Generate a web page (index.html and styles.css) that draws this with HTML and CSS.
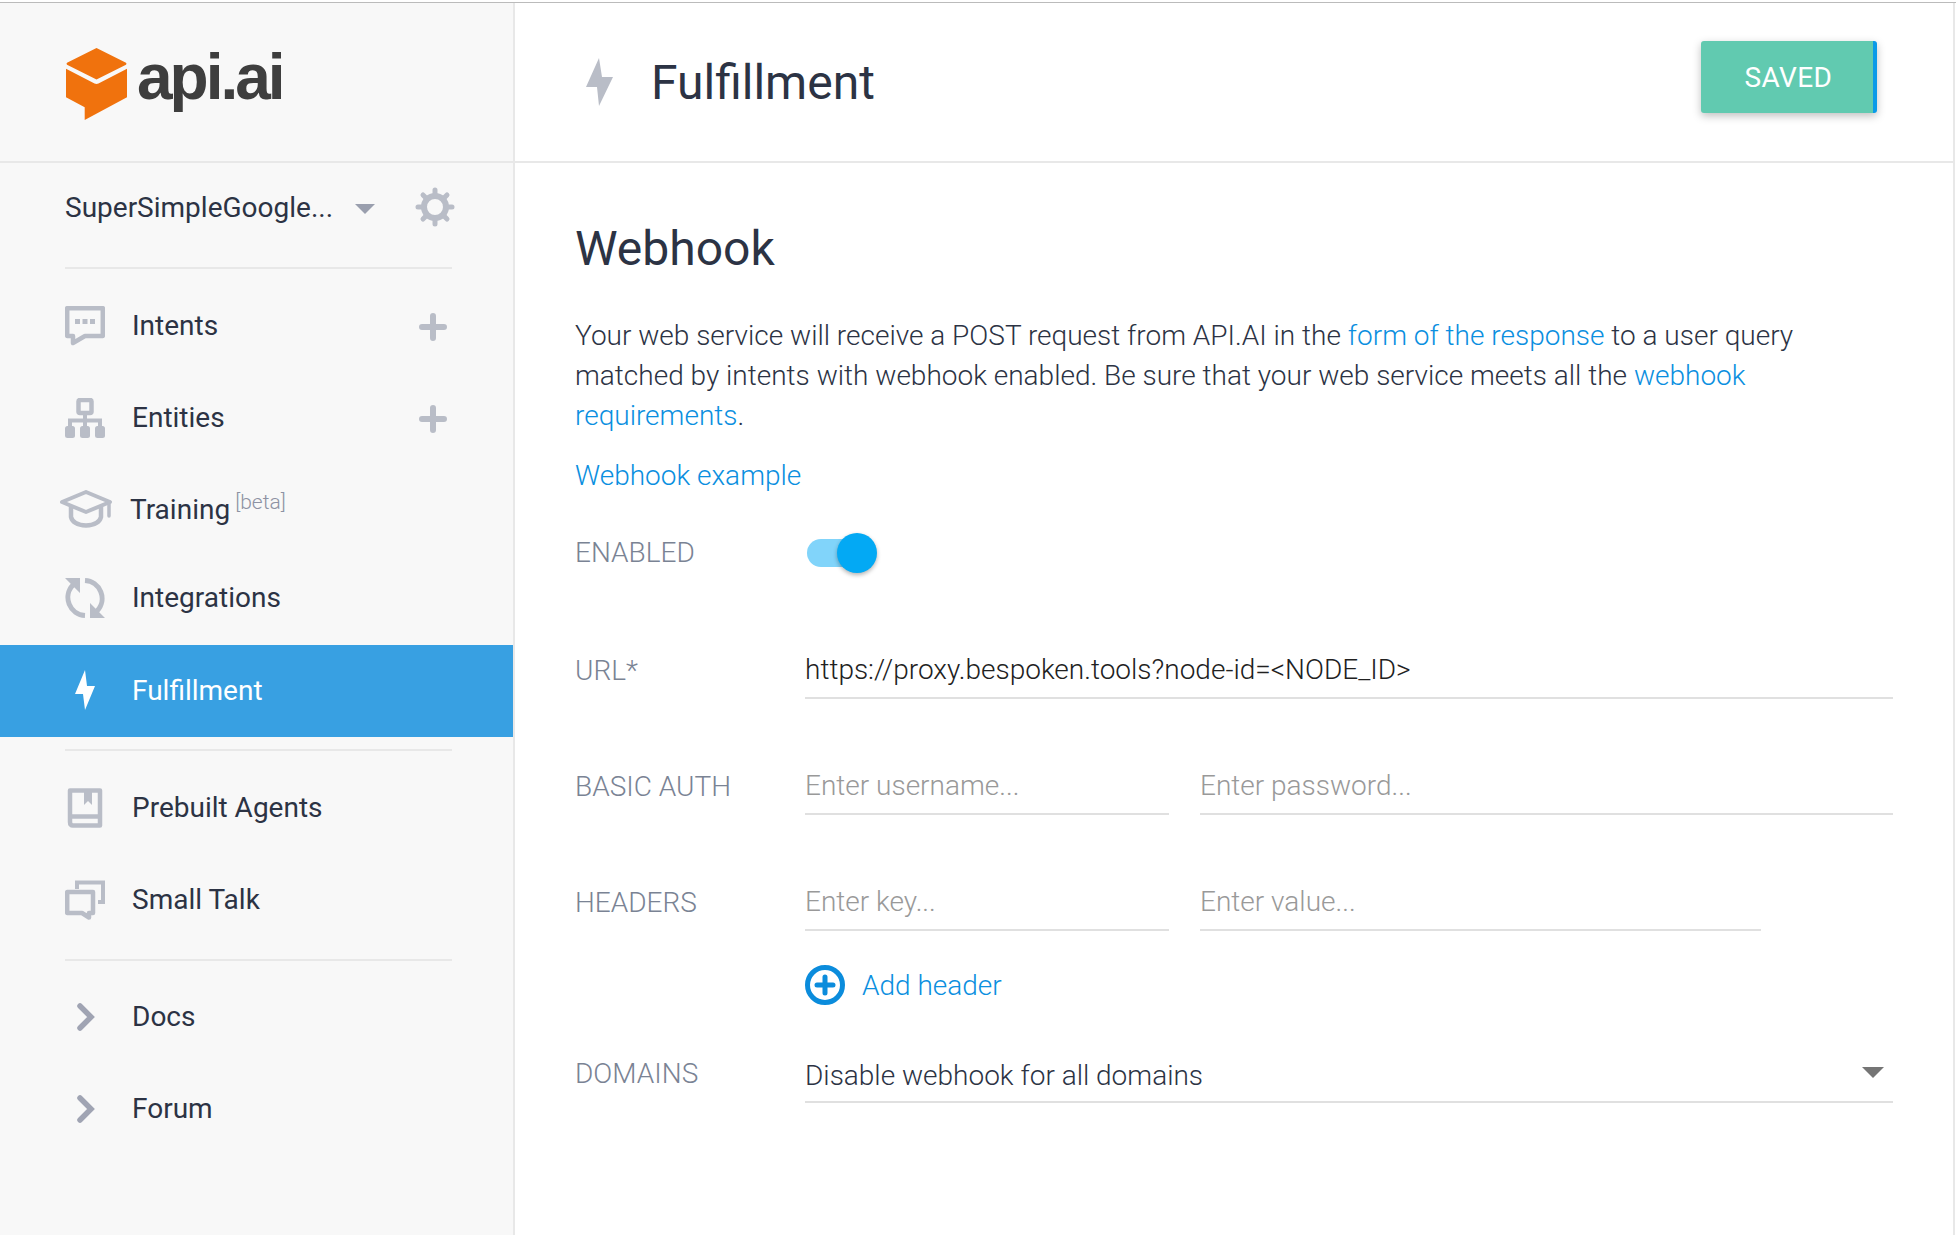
FILE: index.html
```html
<!DOCTYPE html>
<html lang="en">
<head>
    <meta charset="UTF-8">
    <meta name="viewport" content="width=device-width, initial-scale=1.0">
    <title>Fulfillment</title>
    <link rel="stylesheet" href="styles.css">
</head>
<body>

<div class="app">
    <!-- Sidebar -->
    <aside class="sidebar">
        <div class="logo-bar">
            <svg class="logo-mark" viewBox="0 0 62 74">
                <path fill="#f0720d" d="M31 0 L61 15 Q62 16 61 17 L31 32 L1 17 Q0 16 1 15 Z"/>
                <path fill="#f0720d" d="M0 21 L29 36 Q31 37 33 36 L62 21 V50 L19 73 V60 L0 50 Z"/>
            </svg>
            <span class="logo-text">api.ai</span>
        </div>

        <div class="agent-row">
            <span class="agent-name">SuperSimpleGoogle...</span>
            <span class="agent-caret"></span>
            <svg class="agent-gear" viewBox="0 0 40 40">
                <circle cx="20" cy="20" r="11" fill="none" stroke="#b9bdc7" stroke-width="6"/>
                <g stroke="#b9bdc7" stroke-width="5" stroke-linecap="round">
                    <path d="M20 3V8M20 32V37M3 20H8M32 20H37M8 8L11.5 11.5M28.5 28.5L32 32M32 8L28.5 11.5M11.5 28.5L8 32"/>
                </g>
            </svg>
        </div>
        <div class="sep"></div>

        <nav class="nav nav-first">
            <a class="nav-item">
                <svg class="nav-icon" viewBox="0 0 40 40">
                    <path fill="none" stroke="#b9bdc7" stroke-width="4.5" stroke-linejoin="round" d="M2.2 2.2H37.8V30H20L8 37V30H2.2Z"/>
                    <path fill="#b9bdc7" d="M10 13h5v5h-5zM17.500 13h5v5h-5zM25 13h5v5h-5z"/>
                </svg>
                <span>Intents</span>
                <svg class="nav-plus" viewBox="0 0 28 28"><path stroke="#b9bdc7" stroke-width="6" stroke-linecap="round" d="M14 3V25M3 14H25"/></svg>
            </a>
            <a class="nav-item">
                <svg class="nav-icon" viewBox="0 0 40 40">
                    <rect x="13.500" y="2" width="13" height="13" rx="1.500" fill="none" stroke="#b9bdc7" stroke-width="4.500"/>
                    <path fill="none" stroke="#b9bdc7" stroke-width="4" d="M20 15V27M5 29V22.500H35V29M20 22V29"/>
                    <rect x="0" y="28" width="10" height="12" rx="2.500" fill="#b9bdc7"/>
                    <rect x="15" y="28" width="10" height="12" rx="2.500" fill="#b9bdc7"/>
                    <rect x="30" y="28" width="10" height="12" rx="2.500" fill="#b9bdc7"/>
                </svg>
                <span>Entities</span>
                <svg class="nav-plus" viewBox="0 0 28 28"><path stroke="#b9bdc7" stroke-width="6" stroke-linecap="round" d="M14 3V25M3 14H25"/></svg>
            </a>
            <a class="nav-item nav-training">
                <svg class="training-icon" viewBox="0 0 54 38">
                    <path fill="none" stroke="#b9bdc7" stroke-width="4" stroke-linejoin="round" d="M27 2 L51 12 L27 22 L3 12 Z"/>
                    <path fill="none" stroke="#b9bdc7" stroke-width="4.500" d="M12 17V27Q14 35 27 35.500Q40 35 42 27V17"/>
                    <path fill="none" stroke="#b9bdc7" stroke-width="3.500" stroke-linecap="round" d="M50 12V26"/>
                </svg>
                <span>Training</span>
                <sup class="beta">[beta]</sup>
            </a>
            <a class="nav-item nav-integrations">
                <svg class="nav-icon" viewBox="0 0 40 40">
                    <path fill="none" stroke="#b9bdc7" stroke-width="5" d="M8 7A18 18 0 0 0 20 37.500M32 33A18 18 0 0 0 20 2.500"/>
                    <path fill="#b9bdc7" d="M0 0H15V15ZM40 40H25V25Z"/>
                </svg>
                <span>Integrations</span>
            </a>
            <a class="nav-item nav-active">
                <svg class="nav-icon" viewBox="0 0 40 40">
                    <path fill="#fff" d="M20 0 L10 24 H18 L20 40 L30 16 H22 Z"/>
                </svg>
                <span>Fulfillment</span>
            </a>
        </nav>
        <div class="sep sep-mid"></div>

        <nav class="nav">
            <a class="nav-item">
                <svg class="nav-icon" viewBox="0 0 40 40">
                    <path fill="none" stroke="#b9bdc7" stroke-width="4.500" stroke-linejoin="round" d="M5 2.500H35V37.500H8Q5 37.500 5 34ZM5 28.500H35"/>
                    <path fill="#b9bdc7" d="M19 3H27V17L23 13L19 17Z"/>
                </svg>
                <span>Prebuilt Agents</span>
            </a>
            <a class="nav-item">
                <svg class="nav-icon" viewBox="0 0 40 40">
                    <path fill="none" stroke="#b9bdc7" stroke-width="4" d="M12 9V2.500H38V22H33"/>
                    <path fill="none" stroke="#b9bdc7" stroke-width="4.500" stroke-linejoin="round" d="M2.200 12H28V33H24V37.500L17 33H2.200Z"/>
                </svg>
                <span>Small Talk</span>
            </a>
        </nav>
        <div class="sep sep-low"></div>

        <nav class="nav">
            <a class="nav-item">
                <svg class="nav-icon" viewBox="0 0 40 40"><path fill="none" stroke="#a0a4b3" stroke-width="5.500" stroke-linecap="round" d="M15 9L26 20L15 31"/></svg>
                <span>Docs</span>
            </a>
            <a class="nav-item">
                <svg class="nav-icon" viewBox="0 0 40 40"><path fill="none" stroke="#a0a4b3" stroke-width="5.500" stroke-linecap="round" d="M15 9L26 20L15 31"/></svg>
                <span>Forum</span>
            </a>
        </nav>
    </aside>

    <!-- Main content -->
    <main class="main">
        <header class="topbar">
            <svg class="topbar-icon" viewBox="0 0 27 48">
                <path fill="#b9bdc7" d="M13 0 L0 29 H11 L13 48 L27 19 H16 Z"/>
            </svg>
            <h1>Fulfillment</h1>
            <button class="save-btn" type="button">SAVED</button>
        </header>

        <section class="content">
            <h2>Webhook</h2>
            <p class="intro">Your web service will receive a POST request from API.AI in the <a href="#">form of the response</a> to a user query<br>matched by intents with webhook enabled. Be sure that your web service meets all the <a href="#">webhook</a><br><a href="#">requirements</a>.</p>
            <p class="example"><a href="#">Webhook example</a></p>

            <div class="row row-enabled">
                <label>ENABLED</label>
                <div class="toggle"><span class="knob"></span></div>
            </div>

            <div class="row row-url">
                <label>URL*</label>
                <input class="field" type="text" value="https://proxy.bespoken.tools?node-id=&lt;NODE_ID&gt;">
            </div>

            <div class="row">
                <label>BASIC AUTH</label>
                <input class="field field-small" type="text" placeholder="Enter username...">
                <input class="field" type="text" placeholder="Enter password...">
            </div>

            <div class="row">
                <label>HEADERS</label>
                <input class="field field-small" type="text" placeholder="Enter key...">
                <input class="field field-value" type="text" placeholder="Enter value...">
            </div>

            <a class="add-header" href="#">
                <svg viewBox="0 0 40 40">
                    <circle cx="20" cy="20" r="17.500" fill="none" stroke="#0b8cdc" stroke-width="5"/>
                    <path stroke="#0b8cdc" stroke-width="5" stroke-linecap="round" d="M20 12V28M12 20H28"/>
                </svg>
                <span>Add header</span>
            </a>

            <div class="row row-domains">
                <label>DOMAINS</label>
                <div class="select">Disable webhook for all domains<span class="select-caret"></span></div>
            </div>
        </section>
    </main>
</div>

</body>
</html>
```

FILE: styles.css
```css
* {
    box-sizing: border-box;
}
html, body {
    height: 100%;
}
body {
    margin: 0;
    padding-top: 2px;
    overflow: hidden;
    font-family: Roboto, "Liberation Sans", sans-serif;
    color: #2c3344;
    background-color: #fff;
}
a {
    text-decoration: none;
}
.app {
    display: flex;
    height: 1233px;
    border-top: 1px solid #bbb;
}

/* Sidebar */
.sidebar {
    flex: 0 0 515px;
    background-color: #f8f8f8;
    border-right: 2px solid #e8e8e8;
}
.logo-bar {
    display: flex;
    align-items: flex-start;
    height: 160px;
    padding: 45px 0 0 66px;
    border-bottom: 2px solid #e8e8e8;
}
.logo-mark {
    width: 61px;
    height: 73px;
}
.logo-text {
    margin: -8px 0 0 10px;
    font-family: "Liberation Sans", sans-serif;
    font-size: 64px;
    font-weight: 700;
    letter-spacing: -3px;
    line-height: 74px;
    color: #3e3e3e;
}
.agent-row {
    display: flex;
    align-items: center;
    height: 104px;
    padding: 0 0 16px 65px;
}
.agent-name {
    width: 290px;
    font-size: 28px;
}
.agent-caret {
    width: 0;
    height: 0;
    border-left: 10px solid transparent;
    border-right: 10px solid transparent;
    border-top: 10px solid #9a9fae;
    margin-top: 3px;
}
.agent-gear {
    width: 40px;
    height: 40px;
    margin-left: 40px;
}
.sep {
    height: 2px;
    margin: 0 61px 0 65px;
    background-color: #e8e8e8;
}
.nav-first {
    margin-top: 11px;
}
.sep-mid {
    margin-top: 12px;
    margin-bottom: 11px;
}
.sep-low {
    margin-top: 13px;
    margin-bottom: 10px;
}
.nav-item {
    display: flex;
    align-items: center;
    height: 92px;
    padding: 0 0 1px 65px;
    font-size: 28px;
    color: #2c3344;
}
.nav-icon {
    flex: none;
    width: 40px;
    height: 40px;
    margin-right: 27px;
}
.nav-plus {
    width: 28px;
    height: 28px;
    margin: 3px 66px 0 auto;
}
.nav-training {
    height: 88px;
    padding: 2px 0 0 59px;
}
.training-icon {
    width: 54px;
    height: 38px;
    margin-right: 17px;
}
.beta {
    align-self: center;
    margin: -14px 0 0 5px;
    font-size: 21px;
    font-weight: 300;
    color: #8d92a3;
}
.nav-integrations {
    margin-bottom: 1px;
}
.nav-active {
    padding-bottom: 2px;
    color: #fff;
    background-color: #38a0e2;
}

/* Main */
.main {
    flex: 1;
    margin-right: 1px;
    border-right: 2px solid #e8e8e8;
}
.topbar {
    display: flex;
    align-items: center;
    height: 160px;
    padding: 0 76px 0 71px;
    border-bottom: 2px solid #e8e8e8;
}
.topbar-icon {
    width: 27px;
    height: 48px;
    margin-right: 38px;
}
.topbar h1 {
    margin: 0;
    font-size: 48px;
    font-weight: 400;
}
.save-btn {
    width: 176px;
    height: 72px;
    margin: -10px 0 0 auto;
    padding: 0 0 0 3px;
    font-family: Roboto, sans-serif;
    font-size: 28px;
    letter-spacing: 0.4px;
    color: #fff;
    background-color: #61cab0;
    border: 0;
    border-right: 4px solid #0a9ae8;
    border-radius: 3px;
    box-shadow: 0 3px 8px rgba(0,0,0,0.25);
}
.content {
    padding: 0 0 0 60px;
}
.content h2 {
    margin: 56px 0 0;
    font-size: 48px;
    font-weight: 400;
    line-height: 60px;
}
.intro {
    width: 1230px;
    margin: 37px 0 0;
    font-size: 28px;
    font-weight: 300;
    line-height: 40px;
    color: #2c3344;
    white-space: nowrap;
}
.content a {
    color: #0b8fe0;
}
.example {
    margin: 20px 0 0;
    font-size: 28px;
    font-weight: 300;
    line-height: 40px;
}
.row {
    display: flex;
    align-items: center;
    width: 1318px;
    height: 56px;
    margin-top: 60px;
}
.row label {
    flex: 0 0 230px;
    padding-bottom: 2px;
    font-size: 28px;
    font-weight: 300;
    color: #7a8394;
}
.row-enabled {
    margin-top: 29px;
}
.row-url {
    margin-top: 62px;
}
.toggle {
    position: relative;
    width: 64px;
    height: 28px;
    margin-left: 2px;
    background-color: #81d4fa;
    border-radius: 14px;
}
.knob {
    position: absolute;
    top: -6px;
    right: -6px;
    width: 40px;
    height: 40px;
    background-color: #03a9f4;
    border-radius: 50%;
    box-shadow: 0 2px 4px rgba(0,0,0,0.3);
}
.field {
    flex: 1;
    min-width: 0;
    height: 56px;
    padding: 0 0 1px;
    font-family: Roboto, sans-serif;
    font-size: 28px;
    font-weight: 300;
    color: #212121;
    background: transparent;
    border: 0;
    border-bottom: 2px solid #e0e0e0;
    outline: none;
}
.field::placeholder {
    color: #999;
    opacity: 1;
}
.field-small {
    flex: 0 0 364px;
    margin-right: 31px;
}
.field-value {
    flex: 0 0 561px;
}
.add-header {
    display: flex;
    align-items: center;
    gap: 17px;
    margin: 34px 0 0 230px;
    font-size: 28px;
    font-weight: 300;
}
.add-header svg {
    width: 40px;
    height: 40px;
}
.row-domains {
    margin-top: 42px;
}
.row-domains label {
    padding-bottom: 4px;
}
.select {
    position: relative;
    flex: 1;
    height: 56px;
    font-size: 28px;
    font-weight: 300;
    line-height: 58px;
    border-bottom: 2px solid #e0e0e0;
}
.select-caret {
    position: absolute;
    top: 20px;
    right: 9px;
    width: 0;
    height: 0;
    border-left: 11px solid transparent;
    border-right: 11px solid transparent;
    border-top: 11px solid #757575;
}
```
